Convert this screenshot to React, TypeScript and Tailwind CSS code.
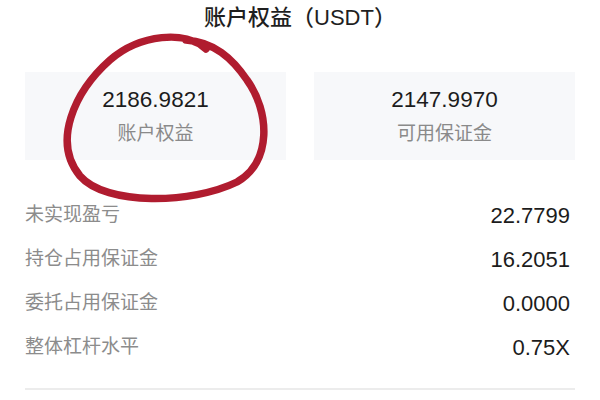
import React from 'react';

// Account equity summary (USDT) with a hand-drawn annotation circle

const font = { fontFamily: '"Liberation Sans", "Noto Sans CJK SC", sans-serif' };

const stats = [
  { value: '2186.9821', label: '账户权益' },
  { value: '2147.9970', label: '可用保证金' },
];

const rows = [
  { label: '未实现盈亏', value: '22.7799' },
  { label: '持仓占用保证金', value: '16.2051' },
  { label: '委托占用保证金', value: '0.0000' },
  { label: '整体杠杆水平', value: '0.75X' },
];

function Scribble() {
  return (
    <svg className="absolute left-0 top-0 pointer-events-none" width="600" height="400" viewBox="0 0 600 400">
      <path
        d="M 206 49 C 186 30, 140 34, 110 60 C 74 92, 52 142, 80 176 C 106 206, 192 204, 237 182 C 272 162, 270 112, 247 80 C 232 58, 214 42, 186 40"
        fill="none"
        stroke="#b01c2f"
        strokeWidth="7.5"
        strokeLinecap="round"
      />
    </svg>
  );
}

export default function App() {
  return (
    <div className="relative w-[600px] h-[400px] bg-white overflow-hidden" style={font}>
      <div className="px-[25px]">
        <h1 className="pt-[4px] text-center text-[22px] leading-[28px] font-medium text-[#1f1f1f]">
          账户权益（USDT）
        </h1>

        <div className="mt-[40px] grid grid-cols-2 gap-[28px]">
          {stats.map((s) => (
            <div key={s.label} className="h-[88px] bg-[#f7f8fa] flex flex-col items-center pt-[16px]">
              <div className="text-[22.5px] leading-[24px] text-[#1c1c1c]">{s.value}</div>
              <div className="mt-[10px] text-[19px] leading-[24px] text-[#8a8a8a]">{s.label}</div>
            </div>
          ))}
        </div>

        <div className="mt-[33px]">
          {rows.map((r) => (
            <div key={r.label} className="h-[44px] flex items-center justify-between pr-[5px]">
              <span className="text-[19px] text-[#8c8c8c]">{r.label}</span>
              <span className="text-[22px] text-[#1c1c1c]">{r.value}</span>
            </div>
          ))}
        </div>

        <div className="mt-[19px] h-[2px] bg-[#ececec]" />
      </div>

      <Scribble />
    </div>
  );
}
